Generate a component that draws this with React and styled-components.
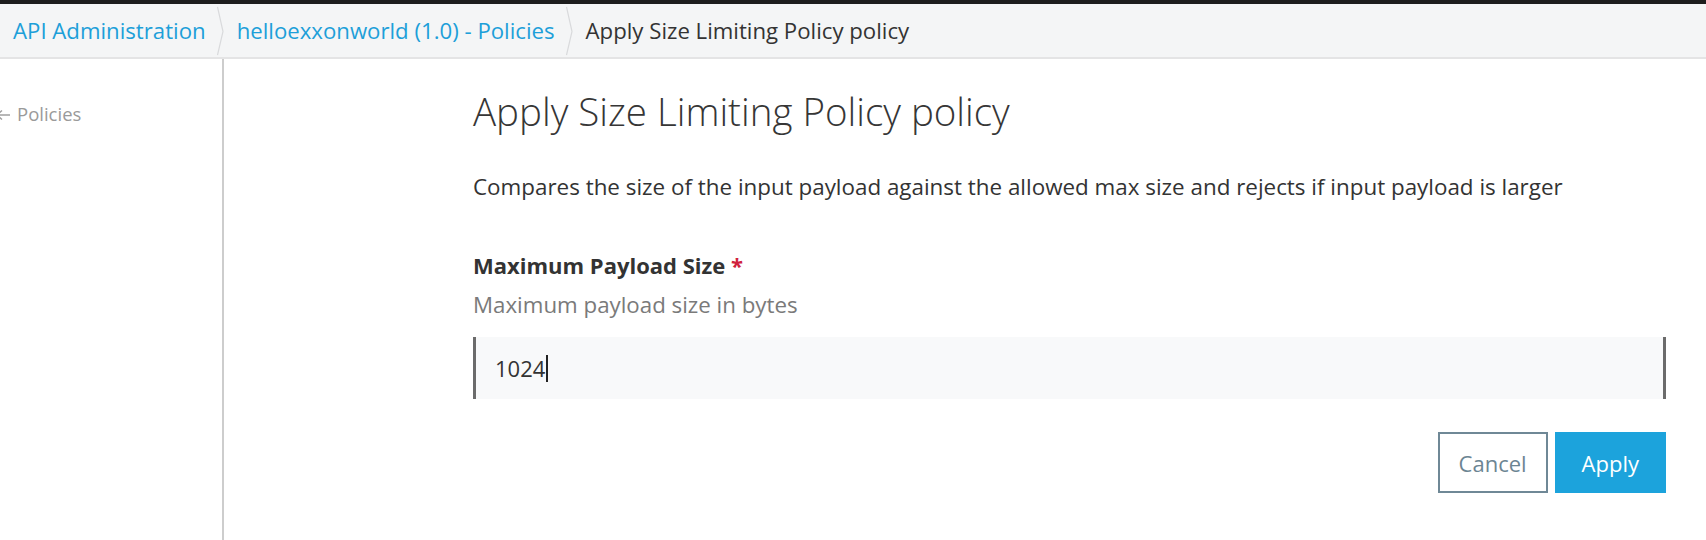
import React from "react";
import styled, { createGlobalStyle } from "styled-components";

const GlobalStyle = createGlobalStyle`
  html, body { margin: 0; padding: 0; background: #ffffff; }
  body { font-family: "Open Sans", "Liberation Sans", sans-serif; color: #333333; }
  * { box-sizing: border-box; }
`;

const Page = styled.div`
  display: flex;
  flex-direction: column;
  height: 540px;
  overflow: hidden;
`;

const TopStripe = styled.div`
  height: 4px;
  flex: none;
  background: #1d1d1d;
`;

const Breadcrumbs = styled.nav`
  flex: none;
  height: 55px;
  display: flex;
  align-items: stretch;
  padding-left: 13px;
  background: #f4f5f6;
  border-bottom: 2px solid #e4e4e5;
`;

const Crumb = styled.a`
  display: flex;
  align-items: center;
  font-size: 22.2px;
  line-height: 30px;
  color: ${(p) => (p.$current ? "#333333" : "#1d9fd9")};
  text-decoration: none;
  white-space: nowrap;
`;

const SepWrap = styled.span`
  display: flex;
  align-items: stretch;
  margin: 0 13px 0 11px;
`;

const Separator = () => (
  <SepWrap aria-hidden="true">
    <svg width="7" height="53" viewBox="0 0 7 53">
      <path d="M0.5 3 L6 27.5 L0.5 51" fill="none" stroke="#d9dadc" strokeWidth="1.2" />
    </svg>
  </SepWrap>
);

const Body = styled.div`
  flex: 1;
  display: flex;
  min-height: 0;
`;

const Sidebar = styled.aside`
  width: 224px;
  flex: none;
  border-right: 2px solid #cdcdcd;
  padding-top: 42px;
  overflow: hidden;
`;

const BackLink = styled.a`
  display: flex;
  align-items: center;
  gap: 7px;
  font-size: 18.5px;
  line-height: 26px;
  color: #9a9a9a;
  text-decoration: none;
`;

const BackArrow = () => (
  <svg width="10" height="14" viewBox="0 0 10 14" style={{ overflow: "hidden", marginTop: 2 }}>
    <path d="M-3 7 L2 2.5 M-3 7 L2 11.5 M-3 7 H10" fill="none" stroke="#a0a0a0" strokeWidth="1.4" />
  </svg>
);

const Main = styled.main`
  flex: 1;
  padding: 30px 40px 0 249px;
`;

const Title = styled.h1`
  margin: 0;
  font-size: 38.5px;
  line-height: 44px;
  font-weight: 300;
  color: #363636;
  letter-spacing: 0;
`;

const Description = styled.p`
  margin: 39px 0 0;
  font-size: 22.4px;
  line-height: 30px;
  color: #333333;
`;

const Field = styled.div`
  margin-top: 48px;
`;

const Label = styled.label`
  display: block;
  font-size: 22px;
  line-height: 30px;
  font-weight: 700;
  color: #333333;
`;

const Required = styled.span`
  color: #d0223c;
`;

const Help = styled.div`
  margin-top: 10px;
  font-size: 22.3px;
  line-height: 30px;
  color: #7a7a7a;
`;

const Caret = styled.span`
  display: inline-block;
  width: 1.5px;
  height: 27px;
  background: #222;
  margin-left: 1px;
`;

const InputBox = styled.div`
  display: flex;
  align-items: center;
  height: 62px;
  margin-top: 17px;
  padding: 0 19px;
  border-left: 3px solid #6b6b6b;
  border-right: 3px solid #6b6b6b;
  background: #f8f9fa;
  font-size: 22px;
  line-height: 30px;
  color: #333333;
`;

const Actions = styled.div`
  display: flex;
  justify-content: flex-end;
  gap: 7px;
  margin-top: 33px;
`;

const Button = styled.button`
  height: 61px;
  padding: 0 ${(p) => p.$padX}px;
  font-family: "Open Sans", "Liberation Sans", sans-serif;
  font-size: 22px;
  line-height: 30px;
  border: 2px solid ${(p) => (p.$primary ? "#1ca3dc" : "#6f8896")};
  background: ${(p) => (p.$primary ? "#1ca3dc" : "#ffffff")};
  color: ${(p) => (p.$primary ? "#ffffff" : "#6c8593")};
  border-radius: 0;
  cursor: pointer;
`;

export default function App() {
  return (
    <>
      <GlobalStyle />
      <Page>
        <TopStripe />
        <Breadcrumbs>
          <Crumb href="#">API Administration</Crumb>
          <Separator />
          <Crumb href="#">helloexxonworld (1.0) - Policies</Crumb>
          <Separator />
          <Crumb $current>Apply Size Limiting Policy policy</Crumb>
        </Breadcrumbs>
        <Body>
          <Sidebar>
            <BackLink href="#">
              <BackArrow />
              Policies
            </BackLink>
          </Sidebar>
          <Main>
            <Title>Apply Size Limiting Policy policy</Title>
            <Description>
              Compares the size of the input payload against the allowed max size and rejects if input payload is larger
            </Description>
            <Field>
              <Label>
                Maximum Payload Size <Required>*</Required>
              </Label>
              <Help>Maximum payload size in bytes</Help>
              <InputBox>
                1024
                <Caret />
              </InputBox>
            </Field>
            <Actions>
              <Button $padX={19}>Cancel</Button>
              <Button $primary $padX={25}>Apply</Button>
            </Actions>
          </Main>
        </Body>
      </Page>
    </>
  );
}
